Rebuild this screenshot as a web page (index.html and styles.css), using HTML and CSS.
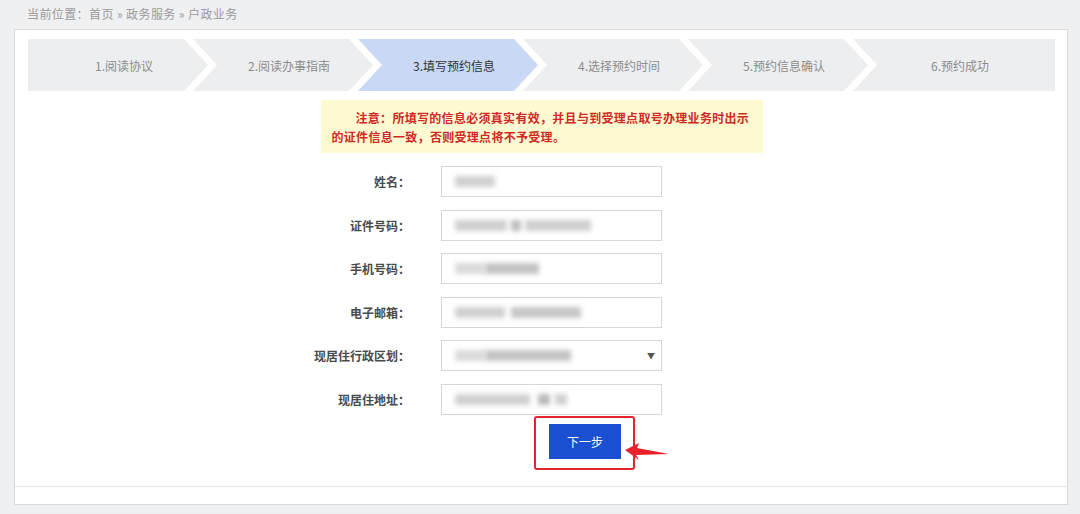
FILE: index.html
```html
<!DOCTYPE html>
<html lang="zh-CN">
<head>
<meta charset="utf-8">
<title>户政业务</title>
<link rel="stylesheet" href="styles.css">
</head>
<body>
<div class="crumb">当前位置：首页 » 政务服务 » 户政业务</div>
<div class="card">
  <div class="main">
    <div class="steps">
      <div class="step first">1.阅读协议</div>
      <div class="step">2.阅读办事指南</div>
      <div class="step active">3.填写预约信息</div>
      <div class="step">4.选择预约时间</div>
      <div class="step">5.预约信息确认</div>
      <div class="step last">6.预约成功</div>
    </div>
    <div class="notice">注意：所填写的信息必须真实有效，并且与到受理点取号办理业务时出示的证件信息一致，否则受理点将不予受理。</div>
    <div class="form">
      <div class="row">
        <label class="lbl">姓名：</label>
        <div class="field"><span class="blur b1"></span></div>
      </div>
      <div class="row">
        <label class="lbl">证件号码：</label>
        <div class="field"><span class="blur b2a"></span><span class="blur b2b"></span><span class="blur b2c"></span></div>
      </div>
      <div class="row">
        <label class="lbl">手机号码：</label>
        <div class="field"><span class="blur b3a"></span><span class="blur b3b"></span></div>
      </div>
      <div class="row">
        <label class="lbl">电子邮箱：</label>
        <div class="field"><span class="blur b4a"></span><span class="blur b4b"></span></div>
      </div>
      <div class="row">
        <label class="lbl">现居住行政区划：</label>
        <div class="field select"><span class="blur b5a"></span><span class="blur b5b"></span><span class="caret">▼</span></div>
      </div>
      <div class="row">
        <label class="lbl">现居住地址：</label>
        <div class="field"><span class="blur b6a"></span><span class="blur b6b"></span><span class="blur b6c"></span></div>
      </div>
    </div>
    <div class="btn-wrap">
      <button class="btn">下一步</button>
      <svg class="arrow" width="48" height="24" viewBox="0 0 48 24"><polygon points="1,10 15,3 13,8 45,14 12,15 15,20" fill="#e8202a"/></svg>
    </div>
  </div>
  <div class="foot"></div>
</div>
</body>
</html>
```

FILE: styles.css
```css
* { box-sizing: border-box; }
body {
  margin: 0;
  background: #eff0f2;
  font-family: "Noto Sans CJK SC", "Noto Sans", sans-serif;
  font-size: 12px;
}
.crumb {
  height: 29px;
  line-height: 28px;
  padding-left: 27px;
  color: #9a9a9a;
  letter-spacing: 0.4px;
}
.card {
  margin: 0 12px 0 14px;
  border: 1px solid #d9d9d9;
  background: #fff;
}
.main {
  padding: 9px 12px 16px 13px;
  border-bottom: 1px solid #e4e4e4;
}
.steps {
  display: flex;
  height: 52px;
}
.step {
  width: 180px;
  flex: 0 0 180px;
  margin-left: -15px;
  padding-left: 12px;
  background: #eceef0;
  color: #8c8c8c;
  display: flex;
  align-items: center;
  justify-content: center;
  clip-path: polygon(0 0, calc(100% - 24px) 0, 100% 50%, calc(100% - 24px) 100%, 0 100%, 24px 50%);
}
.step.first {
  margin-left: 0;
  clip-path: polygon(0 0, calc(100% - 24px) 0, 100% 50%, calc(100% - 24px) 100%, 0 100%);
}
.step.last {
  flex: 1 1 auto;
  clip-path: polygon(0 0, 100% 0, 100% 100%, 0 100%, 24px 50%);
}
.step.active {
  background: #c9d8f5;
  color: #333;
}
.notice {
  width: 442px;
  margin: 9px auto 0;
  padding: 8px 12px 7px 11px;
  background: #fefbd2;
  color: #cf2a25;
  font-weight: bold;
  line-height: 19px;
  letter-spacing: 0.3px;
  text-indent: 2em;
}
.form {
  margin-top: 13px;
  padding-left: 262px;
}
.row {
  display: flex;
  align-items: center;
  height: 31px;
  margin-bottom: 12.5px;
}
.row:last-child { margin-bottom: 0; }
.lbl {
  width: 120px;
  text-align: right;
  font-weight: bold;
  color: #4a4a4a;
  margin-right: 31px;
}
.field {
  position: relative;
  width: 221px;
  height: 31px;
  border: 1px solid #d6d6d6;
  display: flex;
  align-items: center;
  padding-left: 13px;
}
.blur {
  display: inline-block;
  height: 11px;
  background: #d0d0d0;
  filter: blur(2.5px);
}
.b1 { width: 40px; }
.b2a { width: 52px; }
.b2b { width: 10px; margin-left: 4px; background: #bdbdbd; }
.b2c { width: 66px; margin-left: 4px; }
.b3a { width: 30px; background: #dadada; }
.b3b { width: 54px; background: #c2c2c2; }
.b4a { width: 50px; }
.b4b { width: 70px; margin-left: 6px; background: #c6c6c6; }
.b5a { width: 30px; background: #dadada; }
.b5b { width: 86px; background: #c4c4c4; }
.b6a { width: 75px; }
.b6b { width: 12px; margin-left: 8px; background: #b8b8b8; }
.b6c { width: 12px; margin-left: 5px; }
.caret {
  position: absolute;
  right: 6px;
  top: 9px;
  font-size: 8px;
  color: #555;
}
.btn-wrap {
  position: relative;
  width: 101px;
  height: 54px;
  margin: 1.5px 0 0 506px;
  border: 2px solid #e2262b;
  border-radius: 3px;
  padding: 6px 0 0 13px;
}
.btn {
  display: block;
  width: 72px;
  height: 35px;
  border: 0;
  background: #1b4fd1;
  color: #fff;
  font-family: "Noto Sans CJK SC", sans-serif;
  font-size: 12px;
  padding: 0;
}
.arrow {
  position: absolute;
  left: 88px;
  top: 22px;
}
.foot {
  height: 17px;
}
```
